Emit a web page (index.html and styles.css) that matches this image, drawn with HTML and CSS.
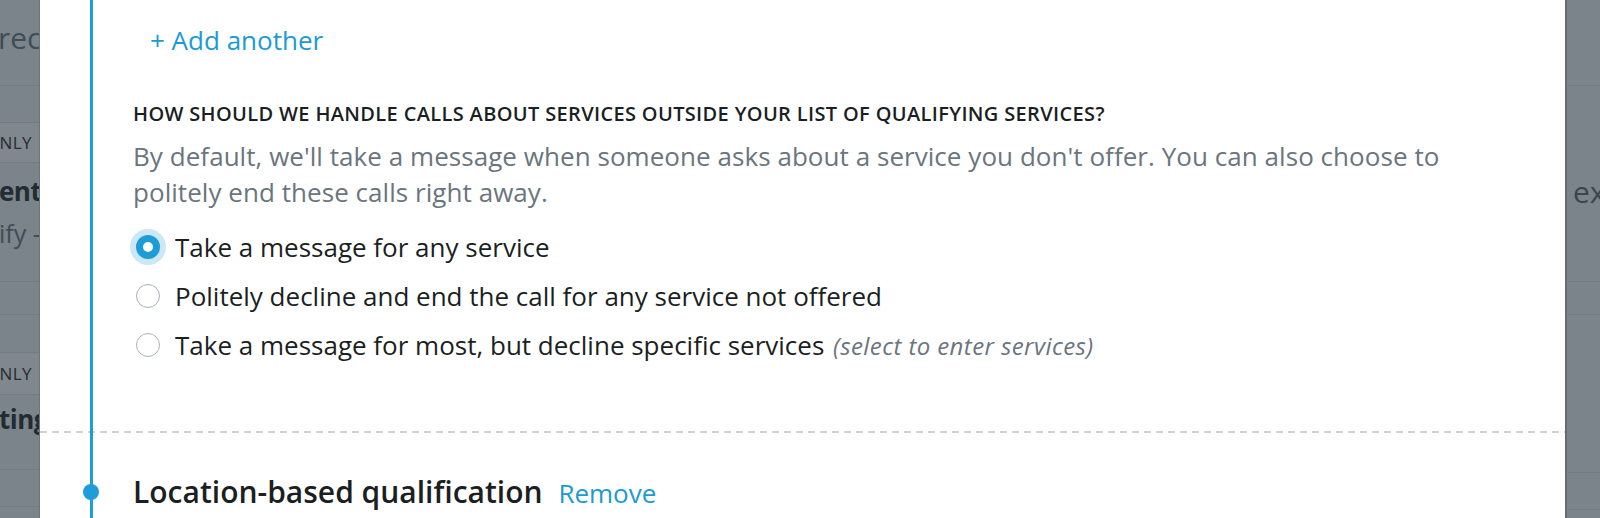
FILE: index.html
```html
<!DOCTYPE html>
<html>
<head>
<meta charset="utf-8">
<link rel="stylesheet" href="styles.css">
</head>
<body>
<div class="screen">
  <div class="backdrop backdrop-left">
    <div class="brow r1"><span class="btext">recording</span></div>
    <div class="brow r2"></div>
    <div class="brow r3 tag"><span class="btag">ONLY</span></div>
    <div class="brow r4"><span class="btitle">entity</span><span class="bsub">ify - qualify</span></div>
    <div class="brow r5"></div>
    <div class="brow r6"></div>
    <div class="brow r7 tag"><span class="btag">ONLY</span></div>
    <div class="brow r8"><span class="btitle">tings</span></div>
    <div class="brow r9"></div>
    <div class="brow r10"></div>
  </div>

  <div class="modal">
    <section class="step step-first">
      <a class="add-link">+ Add another</a>
      <h3 class="q-heading">How should we handle calls about services outside your list of qualifying services?</h3>
      <p class="q-desc">By default, we'll take a message when someone asks about a service you don't offer. You can also choose to politely end these calls right away.</p>
      <div class="radios">
        <label class="radio-row"><span class="radio checked"></span><span class="radio-label">Take a message for any service</span></label>
        <label class="radio-row"><span class="radio"></span><span class="radio-label">Politely decline and end the call for any service not offered</span></label>
        <label class="radio-row"><span class="radio"></span><span class="radio-label">Take a message for most, but decline specific services <em class="hint">(select to enter services)</em></span></label>
      </div>
    </section>
    <div class="separator"></div>
    <section class="step step-second">
      <h2 class="step-title"><span class="dot"></span>Location-based qualification <a class="remove-link">Remove</a></h2>
    </section>
  </div>

  <div class="backdrop backdrop-right">
    <div class="brow r1"></div>
    <div class="brow rr2"><span class="btext-r">ex</span></div>
    <div class="brow r5"></div>
    <div class="brow rr4"></div>
    <div class="brow r9"></div>
    <div class="brow r10"></div>
  </div>
</div>
</body>
</html>
```

FILE: styles.css
```css
* { box-sizing: border-box; }
html, body { margin: 0; padding: 0; }
body {
  width: 1600px;
  height: 518px;
  overflow: hidden;
  font-family: "Open Sans", "Noto Sans", sans-serif;
  background: #7b838b;
}
.screen {
  display: flex;
  height: 518px;
}
.backdrop {
  background: #7b838b;
  display: flex;
  flex-direction: column;
  overflow: hidden;
  color: #36434c;
}
.backdrop-left { width: 40px; flex: none; border-right: 1px solid #6d757c; }
.backdrop-right { flex: 1; border-left: 2px solid #646c74; }
.brow {
  border-bottom: 1px solid #747c83;
  display: flex;
  flex-direction: column;
  white-space: nowrap;
  flex: none;
}
.r1 { height: 86px; padding-top: 16px; }
.r2 { height: 37px; }
.r3 { height: 40px; background: #80878e; justify-content: center; }
.r4 { height: 119px; padding-top: 6px; }
.r5 { height: 33px; }
.r6 { height: 38px; }
.r7 { height: 42px; background: #80878e; justify-content: center; }
.r8 { height: 75px; padding-top: 2px; }
.r9 { height: 37px; }
.r10 { height: 20px; border-bottom: none; }
.rr2 { height: 196px; padding-top: 84px; }
.rr4 { height: 158px; }
.btext { font-size: 30px; margin-left: -2px; color: #3f4d56; line-height: 44px; }
.btext-r { font-size: 30px; margin-left: 6px; color: #3a4750; line-height: 44px; }
.btag { font-size: 17px; margin-left: -14px; color: #262e34; letter-spacing: 0.4px; }
.btitle { font-size: 26px; font-weight: 700; margin-left: -1px; color: #232c32; line-height: 44px; letter-spacing: -0.5px; }
.bsub { font-size: 25px; margin-left: -1px; color: #3f4d56; line-height: 40px; }
.bsub, .btitle { display: block; }

.modal {
  width: 1525px;
  flex: none;
  background: #ffffff;
  position: relative;
}
.modal::before {
  content: "";
  position: absolute;
  left: 50px;
  top: 0;
  bottom: 0;
  width: 3px;
  background: #1e9ed9;
  z-index: 1;
}
.step { padding-left: 93px; }
.step-first { padding-top: 22px; padding-bottom: 69px; }
.add-link {
  display: block;
  color: #1a9ad6;
  font-size: 26px;
  line-height: 36px;
  margin-left: 17px;
}
.q-heading {
  margin: 42px 0 0;
  font-size: 20px;
  font-weight: 600;
  text-transform: uppercase;
  color: #1b1f23;
  line-height: 28px;
  letter-spacing: 0.35px;
}
.q-desc {
  margin: 10px 0 0;
  font-size: 26px;
  line-height: 36px;
  color: #6a757e;
  max-width: 1350px;
  letter-spacing: 0.05px;
}
.radios {
  margin-top: 20px;
  display: flex;
  flex-direction: column;
  gap: 15px;
}
.radio-row {
  display: flex;
  align-items: center;
  height: 34px;
}
.radio {
  width: 24px;
  height: 24px;
  border-radius: 50%;
  border: 1.5px solid #a9b0b7;
  background: #fff;
  margin-left: 3px;
  margin-right: 15px;
  flex: none;
}
.radio.checked {
  border: 7px solid #1d9dd8;
  box-shadow: 0 0 0 6px #cce8f6;
}
.radio-label {
  font-size: 26px;
  color: #1b1f23;
  line-height: 34px;
}
.hint {
  font-size: 24px;
  color: #6a757e;
  margin-left: 2px;
  letter-spacing: 0.4px;
}
.separator {
  height: 2px;
  background-image: linear-gradient(to right, #cdd2d8 0 7px, transparent 7px 12px);
  background-size: 12px 2px;
  background-repeat: repeat-x;
}
.step-second { padding-top: 39px; }
.step-title {
  margin: 0;
  position: relative;
  font-size: 30px;
  font-weight: 600;
  color: #1b1f23;
  line-height: 40px;
}
.dot {
  position: absolute;
  left: -50px;
  top: 12px;
  width: 16px;
  height: 16px;
  border-radius: 50%;
  background: #1e9ed9;
  z-index: 2;
}
.remove-link {
  color: #1a9ad6;
  font-weight: 400;
  font-size: 26px;
  margin-left: 8px;
}
```
